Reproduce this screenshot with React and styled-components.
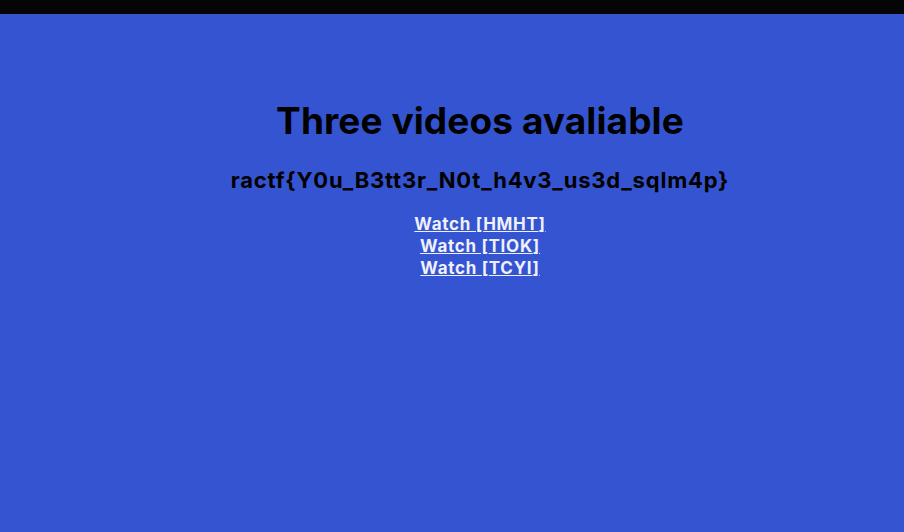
import React from "react";
import styled, { createGlobalStyle } from "styled-components";

const Global = createGlobalStyle`
  html, body { margin: 0; padding: 0; background: #3454d1; }
  body { font-family: Inter, "Open Sans", sans-serif; }
`;

const Page = styled.div`
  min-height: 532px;
  background: #3454d1;
  display: flex;
  flex-direction: column;
`;

const TopBar = styled.div`
  height: 14px;
  background: #050505;
`;

const Main = styled.main`
  display: flex;
  flex-direction: column;
  align-items: center;
  padding: 83px 0 0 56px;
  color: #000;
`;

const Title = styled.h1`
  margin: 0;
  font-size: 37px;
  font-weight: 700;
  line-height: 48px;
  letter-spacing: 0.1px;
`;

const Flag = styled.h3`
  margin: 21px 0 0;
  font-size: 22px;
  font-weight: 700;
  line-height: 28px;
  letter-spacing: 0.8px;
`;

const Links = styled.div`
  margin-top: 19px;
  display: flex;
  flex-direction: column;
  align-items: center;
`;

const VideoLink = styled.a`
  font-size: 17px;
  font-weight: 700;
  line-height: 22px;
  color: #eef0fa;
  text-decoration: underline;
  letter-spacing: 0.7px;
`;

const videos = ["HMHT", "TIOK", "TCYI"];

export default function App() {
  return (
    <>
      <Global />
      <Page>
        <TopBar />
        <Main>
          <Title>Three videos avaliable</Title>
          <Flag>ractf{"{"}Y0u_B3tt3r_N0t_h4v3_us3d_sqlm4p{"}"}</Flag>
          <Links>
            {videos.map((v) => (
              <VideoLink key={v} href="#">
                Watch [{v}]
              </VideoLink>
            ))}
          </Links>
        </Main>
      </Page>
    </>
  );
}
